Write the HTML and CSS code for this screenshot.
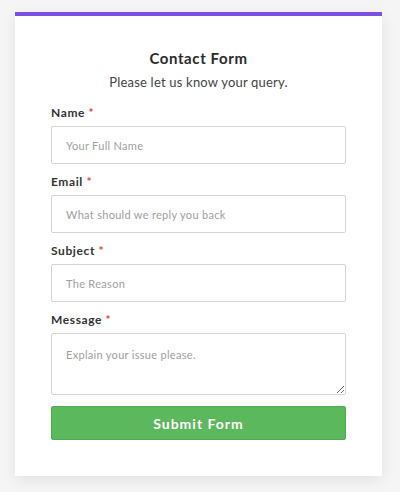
FILE: index.html
```html
<!DOCTYPE html>
<html>
<head>
    <title>Contact Form</title>
    <link rel="stylesheet" href="styles.css">
</head>
<body>
    <div class="card">
        <h1>Contact Form</h1>
        <p class="subtitle">Please let us know your query.</p>

        <form class="form">
            <div class="field">
                <label for="name">Name <span class="req">*</span></label>
                <input type="text" id="name" placeholder="Your Full Name">
            </div>
            <div class="field">
                <label for="email">Email <span class="req">*</span></label>
                <input type="email" id="email" placeholder="What should we reply you back">
            </div>
            <div class="field">
                <label for="subject">Subject <span class="req">*</span></label>
                <input type="text" id="subject" placeholder="The Reason">
            </div>
            <div class="field">
                <label for="message">Message <span class="req">*</span></label>
                <textarea id="message" placeholder="Explain your issue please."></textarea>
            </div>
            <button type="button" class="submit-btn">Submit Form</button>
        </form>
    </div>
</body>
</html>
```

FILE: styles.css
```css
body { font-family: Lato, "Noto Sans", sans-serif; margin: 0; padding: 12px 0 16px 15px; background-color: #f5f5f5; }
.card { width: 295px; background: white; border-top: 4px solid #7b4fe0; padding: 32px 36px 36px; box-shadow: 0 4px 14px rgba(0,0,0,0.08); }
h1 { font-size: 15px; color: #2b2b2b; text-align: center; margin: 0; line-height: 20px; letter-spacing: 0.6px; }
.subtitle { font-size: 13px; color: #444; text-align: center; margin: 4px 0 13px; line-height: 20px; letter-spacing: 0.2px; }
.form { display: flex; flex-direction: column; }
.field { display: flex; flex-direction: column; }
label { font-size: 12px; font-weight: bold; color: #333; line-height: 16px; margin-bottom: 5px; letter-spacing: 0.6px; }
.req { color: #e53935; }
input, textarea { font-family: inherit; font-size: 11px; letter-spacing: 0.3px; color: #333; border: 1px solid #d4d4d4; border-radius: 2px; padding: 0 14px; box-sizing: border-box; width: 100%; margin-bottom: 10px; }
input { height: 38px; }
textarea { height: 62px; padding-top: 14px; resize: vertical; margin-bottom: 11px; }
::placeholder { color: #a0a0a0; }
.submit-btn { font-family: inherit; height: 34px; background-color: #5cb85c; color: white; border: 1px solid #4cae4c; border-radius: 2px; font-size: 14px; font-weight: bold; letter-spacing: 1px; cursor: pointer; }
```
